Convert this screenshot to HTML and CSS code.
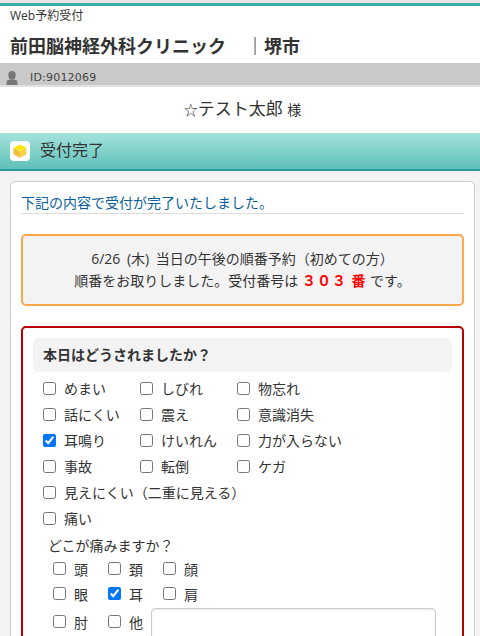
FILE: index.html
```html
<!DOCTYPE html>
<html lang="ja">
<head>
<meta charset="utf-8">
<title>Web予約受付</title>
<link rel="stylesheet" href="styles.css">
</head>
<body>
<header class="site-head">
  <div class="service">Web予約受付</div>
  <h1 class="clinic">前田脳神経外科クリニック<span class="branch">｜堺市</span></h1>
  <div class="idbar">
    <svg class="user" viewBox="0 0 12 14" width="12" height="14"><ellipse cx="6" cy="4.2" rx="3.7" ry="4.2" fill="#777"/><path d="M0.5 14V11.4Q0.5 9.4 3.5 8.6H8.5Q11.5 9.4 11.5 11.4V14Z" fill="#777"/></svg>
    <span class="idtext">ID:9012069</span>
  </div>
</header>
<div class="patient"><span class="star">☆</span>テスト太郎 <small>様</small></div>
<div class="section-head">
  <span class="cube"><svg viewBox="0 0 14 14" width="14" height="14"><path d="M7 0.5L13.5 3.8L7 7.2L0.5 3.8Z" fill="#ffe812"/><path d="M0.5 3.8L7 7.2V13.8L0.5 10.5Z" fill="#f3c23a"/><path d="M13.5 3.8L7 7.2V13.8L13.5 10.5Z" fill="#f7d24e"/></svg></span>
  <span class="section-title">受付完了</span>
</div>
<main class="card">
  <p class="lead">下記の内容で受付が完了いたしました。</p>
  <div class="notice">
    <div class="notice-first">6/26 (木) 当日の午後の順番予約（初めての方）</div>
    <div>順番をお取りしました。受付番号は <strong class="num">３０３ 番</strong> です。</div>
  </div>
  <section class="form">
    <h2 class="q">本日はどうされましたか？</h2>
    <div class="grid">
      <label class="opt"><input type="checkbox">めまい</label>
      <label class="opt"><input type="checkbox">しびれ</label>
      <label class="opt"><input type="checkbox">物忘れ</label>
      <label class="opt"><input type="checkbox">話にくい</label>
      <label class="opt"><input type="checkbox">震え</label>
      <label class="opt"><input type="checkbox">意識消失</label>
      <label class="opt"><input type="checkbox" checked>耳鳴り</label>
      <label class="opt"><input type="checkbox">けいれん</label>
      <label class="opt"><input type="checkbox">力が入らない</label>
      <label class="opt"><input type="checkbox">事故</label>
      <label class="opt"><input type="checkbox">転倒</label>
      <label class="opt"><input type="checkbox">ケガ</label>
      <label class="opt full"><input type="checkbox">見えにくい（二重に見える）</label>
      <label class="opt full"><input type="checkbox">痛い</label>
    </div>
    <div class="sub-q">どこが痛みますか？</div>
    <div class="sub">
      <div class="sub-row">
        <label class="opt2"><input type="checkbox">頭</label>
        <label class="opt2"><input type="checkbox">頚</label>
        <label class="opt2"><input type="checkbox">顔</label>
      </div>
      <div class="sub-row">
        <label class="opt2"><input type="checkbox">眼</label>
        <label class="opt2"><input type="checkbox" checked>耳</label>
        <label class="opt2"><input type="checkbox">肩</label>
      </div>
      <div class="sub-row sub-row-last">
        <label class="opt2"><input type="checkbox">肘</label>
        <label class="opt2 short"><input type="checkbox">他</label>
        <textarea class="other"></textarea>
      </div>
    </div>
  </section>
</main>
</body>
</html>
```
FILE: styles.css
```css
* { box-sizing: border-box; }
html, body { margin: 0; height: 636px; overflow: hidden; }
body {
  background: #f3f3f3;
  color: #333;
  font-family: "Open Sans", "Noto Sans CJK JP", sans-serif;
  font-size: 14px;
}
.site-head {
  background: #fff;
  border-top: 3px solid #e6e6e6;
  height: 85px;
}
.site-head::before {
  content: "";
  display: block;
  height: 3px;
  background: #3bb0aa;
}
.service { font-size: 12px; line-height: 18px; padding: 1px 0 0 10px; height: 19px; }
.clinic {
  margin: 0;
  padding: 8px 0 0 10px;
  font-size: 18px;
  line-height: 27px;
  font-weight: 700;
  white-space: nowrap;
}
.branch { margin-left: 20px; }
.idbar {
  height: 22px;
  margin-top: 3px;
  background: #c9c9c9;
  display: flex;
  align-items: center;
  padding-left: 6px;
  overflow: hidden;
}
.user { margin-top: 7px; }
.idtext {
  margin-left: 12px;
  margin-top: 7px;
  font-family: "DejaVu Sans", sans-serif;
  font-size: 11px;
  letter-spacing: 0.2px;
  color: #444;
}
.patient {
  background: #fff;
  border-top: 2px solid #e0e0e0;
  height: 48px;
  text-align: center;
  font-size: 17px;
  line-height: 44px;
  padding-left: 5px;
}
.star { font-size: 14px; }
.patient small { font-size: 14px; }
.section-head {
  height: 38px;
  background: linear-gradient(#a5e3dc, #5fc0ba);
  border-bottom: 2px solid #2e9a94;
  display: flex;
  align-items: center;
  padding-left: 10px;
  gap: 10px;
  font-size: 16px;
}
.section-title { margin-bottom: 4px; }
.cube {
  width: 20px;
  height: 20px;
  background: #fff;
  border-radius: 4px;
  display: flex;
  align-items: center;
  justify-content: center;
}
.card {
  margin: 10px 5px 0 10px;
  background: #fff;
  border: 1px solid #ccc;
  border-radius: 5px;
  padding: 10px 10px 0;
  height: 600px;
}
.lead {
  margin: 0;
  color: #0b5f9e;
  font-size: 14px;
  line-height: 21px;
  border-bottom: 1px solid #ddd;
  height: 22px;
}
.notice {
  margin-top: 20px;
  height: 72px;
  border: 2px solid #ffa64d;
  border-radius: 5px;
  background: #f3f3f3;
  text-align: center;
  padding-top: 12px;
  line-height: 22px;
}
.notice-first { word-spacing: 3px; }
.num { color: #f00; font-family: "Liberation Serif", "Noto Sans CJK JP", serif; letter-spacing: 1px; }
.form {
  margin-top: 20px;
  border: 2px solid #b80000;
  border-radius: 5px;
  padding: 10px 10px 0;
  height: 400px;
}
.q {
  margin: 0;
  height: 34px;
  background: #f3f3f3;
  border-radius: 5px;
  font-size: 14px;
  font-weight: 700;
  line-height: 34px;
  padding-left: 10px;
}
.grid {
  display: grid;
  grid-template-columns: 97px 97px 1fr;
  grid-auto-rows: 26px;
  margin: 3px 0 0 10px;
}
.opt { display: flex; align-items: center; white-space: nowrap; }
.opt input, .opt2 input { margin: 0 8px 0 0; width: 13px; height: 13px; flex: none; }
.full { grid-column: 1 / -1; }
.sub-q { margin: 4px 0 0 15px; line-height: 21px; }
.sub { margin-left: 20px; }
.sub-row { display: flex; height: 25px; }
.sub-row-last { height: 60px; }
.opt2 { display: flex; align-items: center; width: 55px; height: 25px; }
.sub-row-last .opt2 { height: 31px; }
.opt2.short { width: 43px; }
.other {
  width: 285px;
  height: 60px;
  margin-top: 2px;
  border: 1px solid #ccc;
  border-radius: 4px;
  box-shadow: inset 0 1px 2px rgba(0,0,0,.1);
  resize: none;
}
```
